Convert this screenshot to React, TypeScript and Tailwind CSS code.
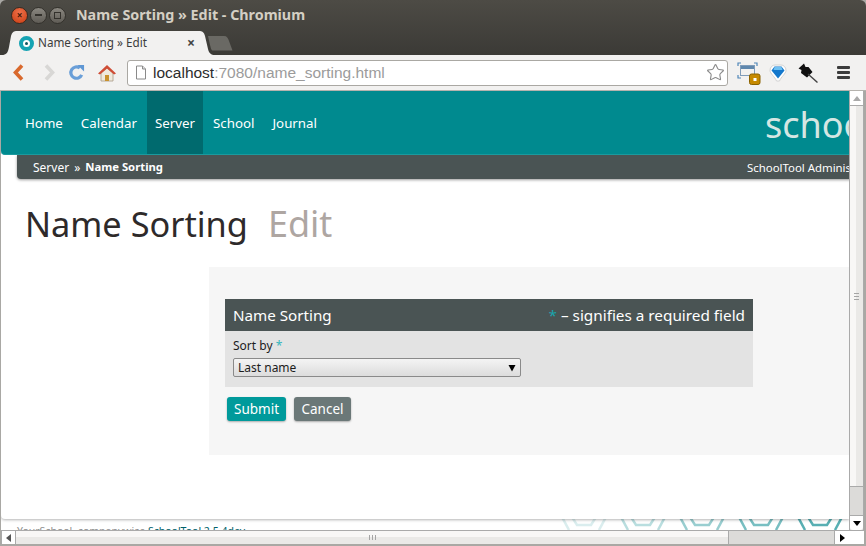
import { Star } from 'lucide-react'

const ubuntu = 'font-["Noto_Sans",sans-serif]'

function WindowButtons() {
  return (
    <div className="flex items-center gap-[2px]">
      <div className="w-[17px] h-[17px] rounded-full bg-[radial-gradient(circle_at_50%_30%,#f0704a,#c93d12)] border border-[#3a2a20] flex items-center justify-center text-[10px] leading-none font-bold text-[#4a1a08]">×</div>
      <div className="w-[17px] h-[17px] rounded-full bg-[linear-gradient(#8a8780,#5f5c56)] border border-[#33312c] flex items-center justify-center">
        <div className="w-[7px] h-[2px] bg-[#33312c]" />
      </div>
      <div className="w-[17px] h-[17px] rounded-full bg-[linear-gradient(#8a8780,#5f5c56)] border border-[#33312c] flex items-center justify-center">
        <div className="w-[7px] h-[7px] border border-[#33312c]" />
      </div>
    </div>
  )
}

function Toolbar() {
  return (
    <div className="h-[36px] bg-[#f2f1f0] border-b border-[#b5b3ae] flex items-center relative z-10">
      <svg width="12" height="17" viewBox="0 0 12 17" className="ml-[12px]">
        <path d="M10 1.5 L3.5 8.5 L10 15.5" fill="none" stroke="#d9692d" strokeWidth="3.6" />
      </svg>
      <svg width="12" height="17" viewBox="0 0 12 17" className="ml-[20px]">
        <path d="M2 1.5 L8.5 8.5 L2 15.5" fill="none" stroke="#d8d7d5" strokeWidth="3.6" />
      </svg>
      <svg width="17" height="17" viewBox="0 0 18 18" className="ml-[12px]">
        <path d="M14.5 11.5 A6 6 0 1 1 12.5 4.2" fill="none" stroke="#6a9fd8" strokeWidth="3.4" />
        <path d="M10 1 L17 1 L17 8 Z" fill="#5f97d4" />
      </svg>
      <svg width="20" height="20" viewBox="0 0 20 20" className="ml-[12px]">
        <path d="M4 10 V18 H16 V10 L10 5 Z" fill="#efe9dd" stroke="#a89a85" strokeWidth="0.8" />
        <path d="M1 10.5 L10 2 L19 10.5 L17 11.5 L10 5.5 L3 11.5 Z" fill="#cf4d36" />
        <rect x="8" y="12" width="4" height="6" fill="#c9922e" />
      </svg>
      <div className="ml-[10px] w-[601px] h-[26px] bg-white border border-[#aaa8a3] rounded-[3px] flex items-center">
        <svg width="12" height="15" viewBox="0 0 12 15" className="ml-[7px]">
          <path d="M1.5 1 H7.5 L10.5 4 V14 H1.5 Z" fill="#fff" stroke="#8a8a8a" />
          <path d="M7.5 1 V4 H10.5" fill="#ddd" stroke="#8a8a8a" />
        </svg>
        <span className="ml-[6px] text-[15.5px] font-['Liberation_Sans',sans-serif] text-[#2c2c2c]">
          localhost<span className="text-[#9b9b9b]">:7080/name_sorting.html</span>
        </span>
        <Star className="ml-auto mr-[2px] text-[#8a8a8a]" size={19} strokeWidth={1.4} />
      </div>
      <svg width="24" height="23" viewBox="0 0 24 23" className="ml-[9px] mt-[1px]">
        <path d="M1 4 V1 H4 M17 1 H20 V4 M1 13 V16 H4 M17 16 H20 V13" fill="none" stroke="#4f86b8" strokeWidth="1.2" />
        <rect x="3.5" y="3.5" width="14" height="10" fill="#f2f1f0" stroke="#7f9cba" />
        <rect x="4" y="4" width="13" height="3" fill="#5f87ad" />
        <rect x="12.5" y="12" width="10.5" height="10.5" rx="2" fill="#c68a00" stroke="#8a6200" />
        <rect x="16.5" y="16" width="3" height="3" fill="#fff" />
      </svg>
      <svg width="18" height="18" viewBox="0 0 18 18" className="ml-[8px]">
        <path d="M1 6.5 C1 3 3.5 1 6 1 H12 C14.5 1 17 3 17 6.5 C17 9.5 12 13 10.5 17 H7.5 C6 13 1 9.5 1 6.5 Z" fill="#fff" stroke="#d2d2d2" />
        <path d="M2.5 6.5 L5.5 2.5 H12.5 L15.5 6.5 L9 14.5 Z" fill="#1478cc" />
        <path d="M5.5 3 H12.5 L13.5 6 H4.5 Z" fill="#6fc0f2" />
      </svg>
      <svg width="20" height="20" viewBox="0 0 20 20" className="ml-[11px]">
        <path d="M6 0.5 L0.5 5.5 L3.5 7 L3 10 L9 14.5 L14.5 9 L10.5 4 L7.5 4 Z" fill="#111" />
        <path d="M10 11 L19.5 19.5" stroke="#444" strokeWidth="1.4" />
      </svg>
      <div className="ml-[19px] flex flex-col gap-[2px]">
        <div className="w-[13px] h-[3px] rounded-[1px] bg-[#3c3c3c]" />
        <div className="w-[13px] h-[3px] rounded-[1px] bg-[#3c3c3c]" />
        <div className="w-[13px] h-[3px] rounded-[1px] bg-[#3c3c3c]" />
      </div>
    </div>
  )
}

function Hexes() {
  const xs = [3, 62, 121, 180, 239]
  return (
    <svg width="290" height="11" viewBox="0 0 290 11" className="absolute right-0 top-0">
      {xs.map((x, i) => (
        <g key={x} opacity={0.2 + i * 0.18}>
          <path d={`M${x} -2 L${x + 7} 11 M${x + 44} -2 L${x + 37} 11`} stroke="#4aa9ad" strokeWidth="2.5" fill="none" />
          <path d={`M${x + 10} -2 L${x + 15} 6 H${x + 29} L${x + 34} -2`} stroke="#4aa9ad" strokeWidth="2.5" fill="none" />
        </g>
      ))}
    </svg>
  )
}

function Page() {
  return (
    <div className={`flex-1 min-w-0 overflow-hidden flex flex-col bg-white ${ubuntu}`}>
      <div className="h-[428px] shrink-0 overflow-hidden shadow-[0_1px_3px_rgba(0,0,0,0.3)] rounded-bl-[4px] relative z-10 bg-white">
        <div className="w-[1100px]">
          <div className="h-[64px] bg-[#008a8f] rounded-bl-[4px] flex gap-[2px] pl-[16px] relative z-10 border-b border-[#1a9a9e]">
            {['Home', 'Calendar', 'Server', 'School', 'Journal'].map((item) => (
              <div
                key={item}
                className={`px-[8px] pt-[2px] h-full flex items-center text-[13.3px] text-white ${item === 'Server' ? 'bg-[#006a6e]' : ''}`}
              >
                {item}
              </div>
            ))}
            <div className="absolute left-[764px] top-[12px] text-[36px] leading-[44px] text-[#d5e6e3]">school</div>
          </div>
          <div className="ml-[16px] pt-[1px] h-[24px] bg-[#4a5454] rounded-bl-[4px] shadow-[0_1px_3px_rgba(0,0,0,0.4)] flex items-center pl-[16px] text-[12px] text-white relative">
            <span>Server</span>
            <span className="mx-[5px]">»</span>
            <span className="font-bold text-[11.3px]">Name Sorting</span>
            <span className="absolute left-[730px] text-[11.4px]">SchoolTool Administrator</span>
          </div>
          <div className="pl-[24px] pt-[23px] h-[88px] leading-[44px] text-[#2e2a2a] flex">
            <span className="text-[34.3px]">Name Sorting</span>
            <span className="ml-[20px] text-[36px] text-[#aea6a2]">Edit</span>
          </div>
          <div className="ml-[208px] h-[188px] w-[641px] bg-[#f6f6f6] pt-[32px] pl-[16px]">
            <div className="w-[528px]">
              <div className="h-[32px] bg-[#4a5454] flex items-center justify-between px-[8px] text-white">
                <span className="text-[15.2px]">Name Sorting</span>
                <span className="text-[15.3px]"><span className="text-[#1aa5ad]">*</span> – signifies a required field</span>
              </div>
              <div className="h-[56px] bg-[#e3e3e3] px-[8px] pt-[7px]">
                <div className="text-[12px] leading-[16px] text-[#1c1c1c]">
                  Sort by <span className="text-[#38b6bd]">*</span>
                </div>
                <div className="mt-[4px] w-[288px] h-[19px] rounded-[2px] border border-[#8a8a8a] bg-[linear-gradient(#f4f4f4,#dcdcdc)] flex items-center justify-between pl-[4px] pr-[4px] text-[12px] text-[#1c1c1c]">
                  <span>Last name</span>
                  <svg width="8" height="8" viewBox="0 0 8 8"><path d="M0.5 1 H7.5 L4 7.5 Z" fill="#000" /></svg>
                </div>
              </div>
            </div>
            <div className="flex gap-[8px] mt-[10px] ml-[2px]">
              <button className="h-[24px] w-[59px] rounded-[3px] bg-[#009a9b] text-white text-[13.5px] shadow-[0_1px_2px_rgba(0,0,0,0.3)]">Submit</button>
              <button className="h-[24px] w-[57px] rounded-[3px] bg-[#6b7878] text-white text-[13.5px] shadow-[0_1px_2px_rgba(0,0,0,0.3)]">Cancel</button>
            </div>
          </div>
        </div>
      </div>
      <div className="h-[11px] relative overflow-hidden pl-[16px] text-[10.5px] leading-[14px] pt-[5px] text-[#8f8f8f]">
        YourSchool, companywise <span className="text-[#00606a]">SchoolTool 2.5.4dev</span>
        <Hexes />
      </div>
    </div>
  )
}

export default function App() {
  return (
    <div className="w-[866px] h-[546px] overflow-hidden bg-[#a9a8a4] flex flex-col">
      <div className="h-[55px] shrink-0 rounded-t-[6px] bg-[linear-gradient(#4d4b45,#3b3a36)] relative">
        <div className="flex items-center h-[29px] pl-[11px] pt-[1px]">
          <WindowButtons />
          <span className={`ml-[10px] text-[14.3px] font-bold text-[#d4cfc4] ${ubuntu}`}>Name Sorting » Edit - Chromium</span>
        </div>
        <svg width="213" height="24" viewBox="0 0 213 24" className="absolute left-[2px] top-[31px]">
          <path d="M0 24 C4 24 6 22 7 16 L9 5 C10 1 12 0 15 0 H197 C200 0 202 1 203 5 L206 18 C207 22 209 24 213 24 Z" fill="#f2f1f0" />
        </svg>
        <div className="absolute left-[10px] top-[31px] w-[199px] h-[24px] flex items-center pl-[9px] font-['Noto_Sans',sans-serif]">
          <div className="w-[15px] h-[15px] rounded-full border-[4px] border-[#16a3b3] flex items-center justify-center bg-white">
            <div className="w-[3px] h-[3px] rounded-full bg-[#0e5560]" />
          </div>
          <span className="ml-[4px] text-[11.7px] text-[#3c3c3c]">Name Sorting » Edit</span>
          <span className="absolute right-[14px] text-[14px] font-bold leading-none text-[#444]">×</span>
        </div>
        <svg width="25" height="15" viewBox="0 0 25 15" className="absolute left-[208px] top-[36px]">
          <path d="M0 0 H16 C19 0 20 2 21 5 L24.5 14.5 H5 C3 14.5 3 12 2 9 Z" fill="#6a6964" />
        </svg>
      </div>
      <Toolbar />
      <div className="flex-1 min-h-0 flex pl-[1px] pr-[2px]">
        <div className="flex-1 min-w-0 flex flex-col">
          <div className="flex-1 min-h-0 flex">
            <Page />
            <div className="w-[15px] shrink-0 bg-[#dcdbd9] border-x border-[#aaa] flex flex-col">
              <div className="h-[15px] bg-white border-b border-[#aaa] flex items-center justify-center">
                <div className="w-0 h-0 border-x-[4px] border-x-transparent border-b-[5px] border-b-[#aaa]" />
              </div>
              <div className="h-[381px] bg-[linear-gradient(90deg,#f8f7f6_50%,#eae9e7_50%)] border-b border-[#aaa] flex flex-col gap-[2px] items-center justify-center">
                <div className="w-[5px] h-[1px] bg-[#a5a5a5]" />
                <div className="w-[5px] h-[1px] bg-[#a5a5a5]" />
                <div className="w-[5px] h-[1px] bg-[#a5a5a5]" />
              </div>
              <div className="flex-1" />
              <div className="h-[15px] bg-white border-t border-[#aaa] rounded-b-[3px] flex items-center justify-center">
                <div className="w-0 h-0 border-x-[4px] border-x-transparent border-t-[5px] border-t-black" />
              </div>
            </div>
          </div>
          <div className="h-[14px] shrink-0 flex border-t border-[#aaa] bg-[#dcdbd9]">
            <div className="w-[15px] bg-white border-x border-[#aaa] flex items-center justify-center">
              <div className="w-0 h-0 border-y-[4px] border-y-transparent border-r-[5px] border-r-[#555]" />
            </div>
            <div className="w-[713px] bg-[linear-gradient(#f8f7f6_50%,#eae9e7_50%)] border-r border-[#aaa] flex gap-[2px] items-center justify-center">
              <div className="w-[1px] h-[5px] bg-[#a5a5a5]" />
              <div className="w-[1px] h-[5px] bg-[#a5a5a5]" />
              <div className="w-[1px] h-[5px] bg-[#a5a5a5]" />
            </div>
            <div className="flex-1" />
            <div className="w-[15px] bg-white border-l border-[#aaa] flex items-center justify-center">
              <div className="w-0 h-0 border-y-[4px] border-y-transparent border-l-[5px] border-l-black" />
            </div>
            <div className="w-[15px] bg-white" />
          </div>
        </div>
      </div>
      <div className="h-[2px] shrink-0" />
    </div>
  )
}
